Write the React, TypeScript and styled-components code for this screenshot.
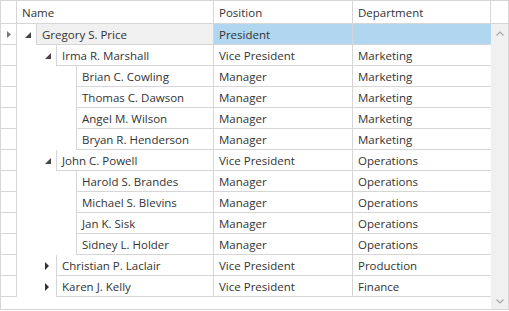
import styled, { createGlobalStyle } from 'styled-components'

const GlobalStyle = createGlobalStyle`
  html, body {
    margin: 0;
    padding: 0;
    background: #fff;
  }
  body {
    font-family: 'Segoe UI', 'Open Sans', sans-serif;
    font-size: 11.5px;
    color: #333;
  }
`

const LINE = '#d6d6d6'

type Person = {
  name: string
  position: string
  department: string
  level: number
  state: 'open' | 'closed' | 'leaf'
}

const PEOPLE: Person[] = [
  { name: 'Gregory S. Price', position: 'President', department: '', level: 0, state: 'open' },
  { name: 'Irma R. Marshall', position: 'Vice President', department: 'Marketing', level: 1, state: 'open' },
  { name: 'Brian C. Cowling', position: 'Manager', department: 'Marketing', level: 2, state: 'leaf' },
  { name: 'Thomas C. Dawson', position: 'Manager', department: 'Marketing', level: 2, state: 'leaf' },
  { name: 'Angel M. Wilson', position: 'Manager', department: 'Marketing', level: 2, state: 'leaf' },
  { name: 'Bryan R. Henderson', position: 'Manager', department: 'Marketing', level: 2, state: 'leaf' },
  { name: 'John C. Powell', position: 'Vice President', department: 'Operations', level: 1, state: 'open' },
  { name: 'Harold S. Brandes', position: 'Manager', department: 'Operations', level: 2, state: 'leaf' },
  { name: 'Michael S. Blevins', position: 'Manager', department: 'Operations', level: 2, state: 'leaf' },
  { name: 'Jan K. Sisk', position: 'Manager', department: 'Operations', level: 2, state: 'leaf' },
  { name: 'Sidney L. Holder', position: 'Manager', department: 'Operations', level: 2, state: 'leaf' },
  { name: 'Christian P. Laclair', position: 'Vice President', department: 'Production', level: 1, state: 'closed' },
  { name: 'Karen J. Kelly', position: 'Vice President', department: 'Finance', level: 1, state: 'closed' },
]

const Grid = styled.div`
  box-sizing: border-box;
  width: 509px;
  height: 310px;
  border: 1px solid ${LINE};
  display: flex;
  flex-direction: column;
  overflow: hidden;
`

const HeaderRow = styled.div`
  display: flex;
  height: 23px;
  box-sizing: border-box;
  border-bottom: 1px solid ${LINE};
  flex-shrink: 0;
`

const HeaderCell = styled.div<{ $w: number; $edge?: boolean }>`
  box-sizing: border-box;
  width: ${p => p.$w}px;
  flex-shrink: 0;
  border-right: ${p => (p.$edge ? 'none' : `1px solid ${LINE}`)};
  padding: 1px 0 0 5px;
  line-height: 21px;
  white-space: nowrap;
`

const Body = styled.div`
  flex: 1;
  display: flex;
  min-height: 0;
`

const Rows = styled.div`
  width: 490px;
  display: flex;
  flex-direction: column;
`

const Row = styled.div`
  display: flex;
  height: 21px;
`

const Indicator = styled.div`
  box-sizing: border-box;
  width: 16px;
  flex-shrink: 0;
  border-right: 1px solid ${LINE};
  border-bottom: 1px solid ${LINE};
  display: flex;
  align-items: center;
  padding-left: 6px;
`

const NameArea = styled.div`
  width: 197px;
  flex-shrink: 0;
  display: flex;
`

const Indent = styled.div<{ $level: number }>`
  width: ${p => p.$level * 20}px;
  flex-shrink: 0;
`

const Expander = styled.div`
  width: 19px;
  flex-shrink: 0;
  display: flex;
  align-items: center;
  justify-content: center;
`

const Cell = styled.div<{ $w?: number; $bg?: string; $left?: boolean; $right?: boolean }>`
  box-sizing: border-box;
  ${p => (p.$w ? `width: ${p.$w}px; flex-shrink: 0;` : 'flex: 1; min-width: 0;')}
  background: ${p => p.$bg ?? '#fff'};
  border-left: ${p => (p.$left ? `1px solid ${LINE}` : 'none')};
  border-right: ${p => (p.$right ? `1px solid ${LINE}` : 'none')};
  border-bottom: 1px solid ${LINE};
  padding: 1px 0 0 5px;
  line-height: 19px;
  white-space: nowrap;
  overflow: hidden;
`

const ScrollBar = styled.div`
  width: 17px;
  flex-shrink: 0;
  background: #f0f0f0;
  display: flex;
  flex-direction: column;
  justify-content: space-between;
  align-items: center;
  padding: 7px 0 5px;
`

const Glyph = styled.svg`
  display: block;
`

function ExpanderIcon({ state }: { state: Person['state'] }) {
  if (state === 'open') {
    return (
      <Glyph width="6" height="6" viewBox="0 0 6 6" style={{ marginLeft: 2 }}>
        <path d="M6 0 L6 6 L0 6 Z" fill="#444" />
      </Glyph>
    )
  }
  if (state === 'closed') {
    return (
      <Glyph width="4" height="8" viewBox="0 0 4 8">
        <path d="M0 0 L4 4 L0 8 Z" fill="#333" />
      </Glyph>
    )
  }
  return null
}

export default function App() {
  return (
    <>
      <GlobalStyle />
      <Grid>
        <HeaderRow>
          <HeaderCell $w={16} />
          <HeaderCell $w={197}>Name</HeaderCell>
          <HeaderCell $w={139}>Position</HeaderCell>
          <HeaderCell $w={138}>Department</HeaderCell>
          <HeaderCell $w={17} $edge />
        </HeaderRow>
        <Body>
          <Rows>
            {PEOPLE.map((p, i) => {
              const selected = i === 0
              return (
                <Row key={p.name}>
                  <Indicator>
                    {selected && (
                      <Glyph width="4" height="7" viewBox="0 0 4 7">
                        <path d="M0 0 L4 3.5 L0 7 Z" fill="#7a7a7a" />
                      </Glyph>
                    )}
                  </Indicator>
                  <NameArea>
                    <Indent $level={p.level} />
                    <Expander>
                      <ExpanderIcon state={p.state} />
                    </Expander>
                    <Cell $left $right $bg={selected ? '#f0f0f0' : undefined}>
                      {p.name}
                    </Cell>
                  </NameArea>
                  <Cell $w={139} $right $bg={selected ? '#b1d6f0' : undefined}>
                    {p.position}
                  </Cell>
                  <Cell $w={138} $bg={selected ? '#b1d6f0' : undefined}>
                    {p.department}
                  </Cell>
                </Row>
              )
            })}
          </Rows>
          <ScrollBar>
            <Glyph width="8" height="5" viewBox="0 0 8 5">
              <path d="M0.5 4.5 L4 1 L7.5 4.5" fill="none" stroke="#a6a6a6" strokeWidth="1.2" />
            </Glyph>
            <Glyph width="8" height="5" viewBox="0 0 8 5">
              <path d="M0.5 0.5 L4 4 L7.5 0.5" fill="none" stroke="#a6a6a6" strokeWidth="1.2" />
            </Glyph>
          </ScrollBar>
        </Body>
      </Grid>
    </>
  )
}
